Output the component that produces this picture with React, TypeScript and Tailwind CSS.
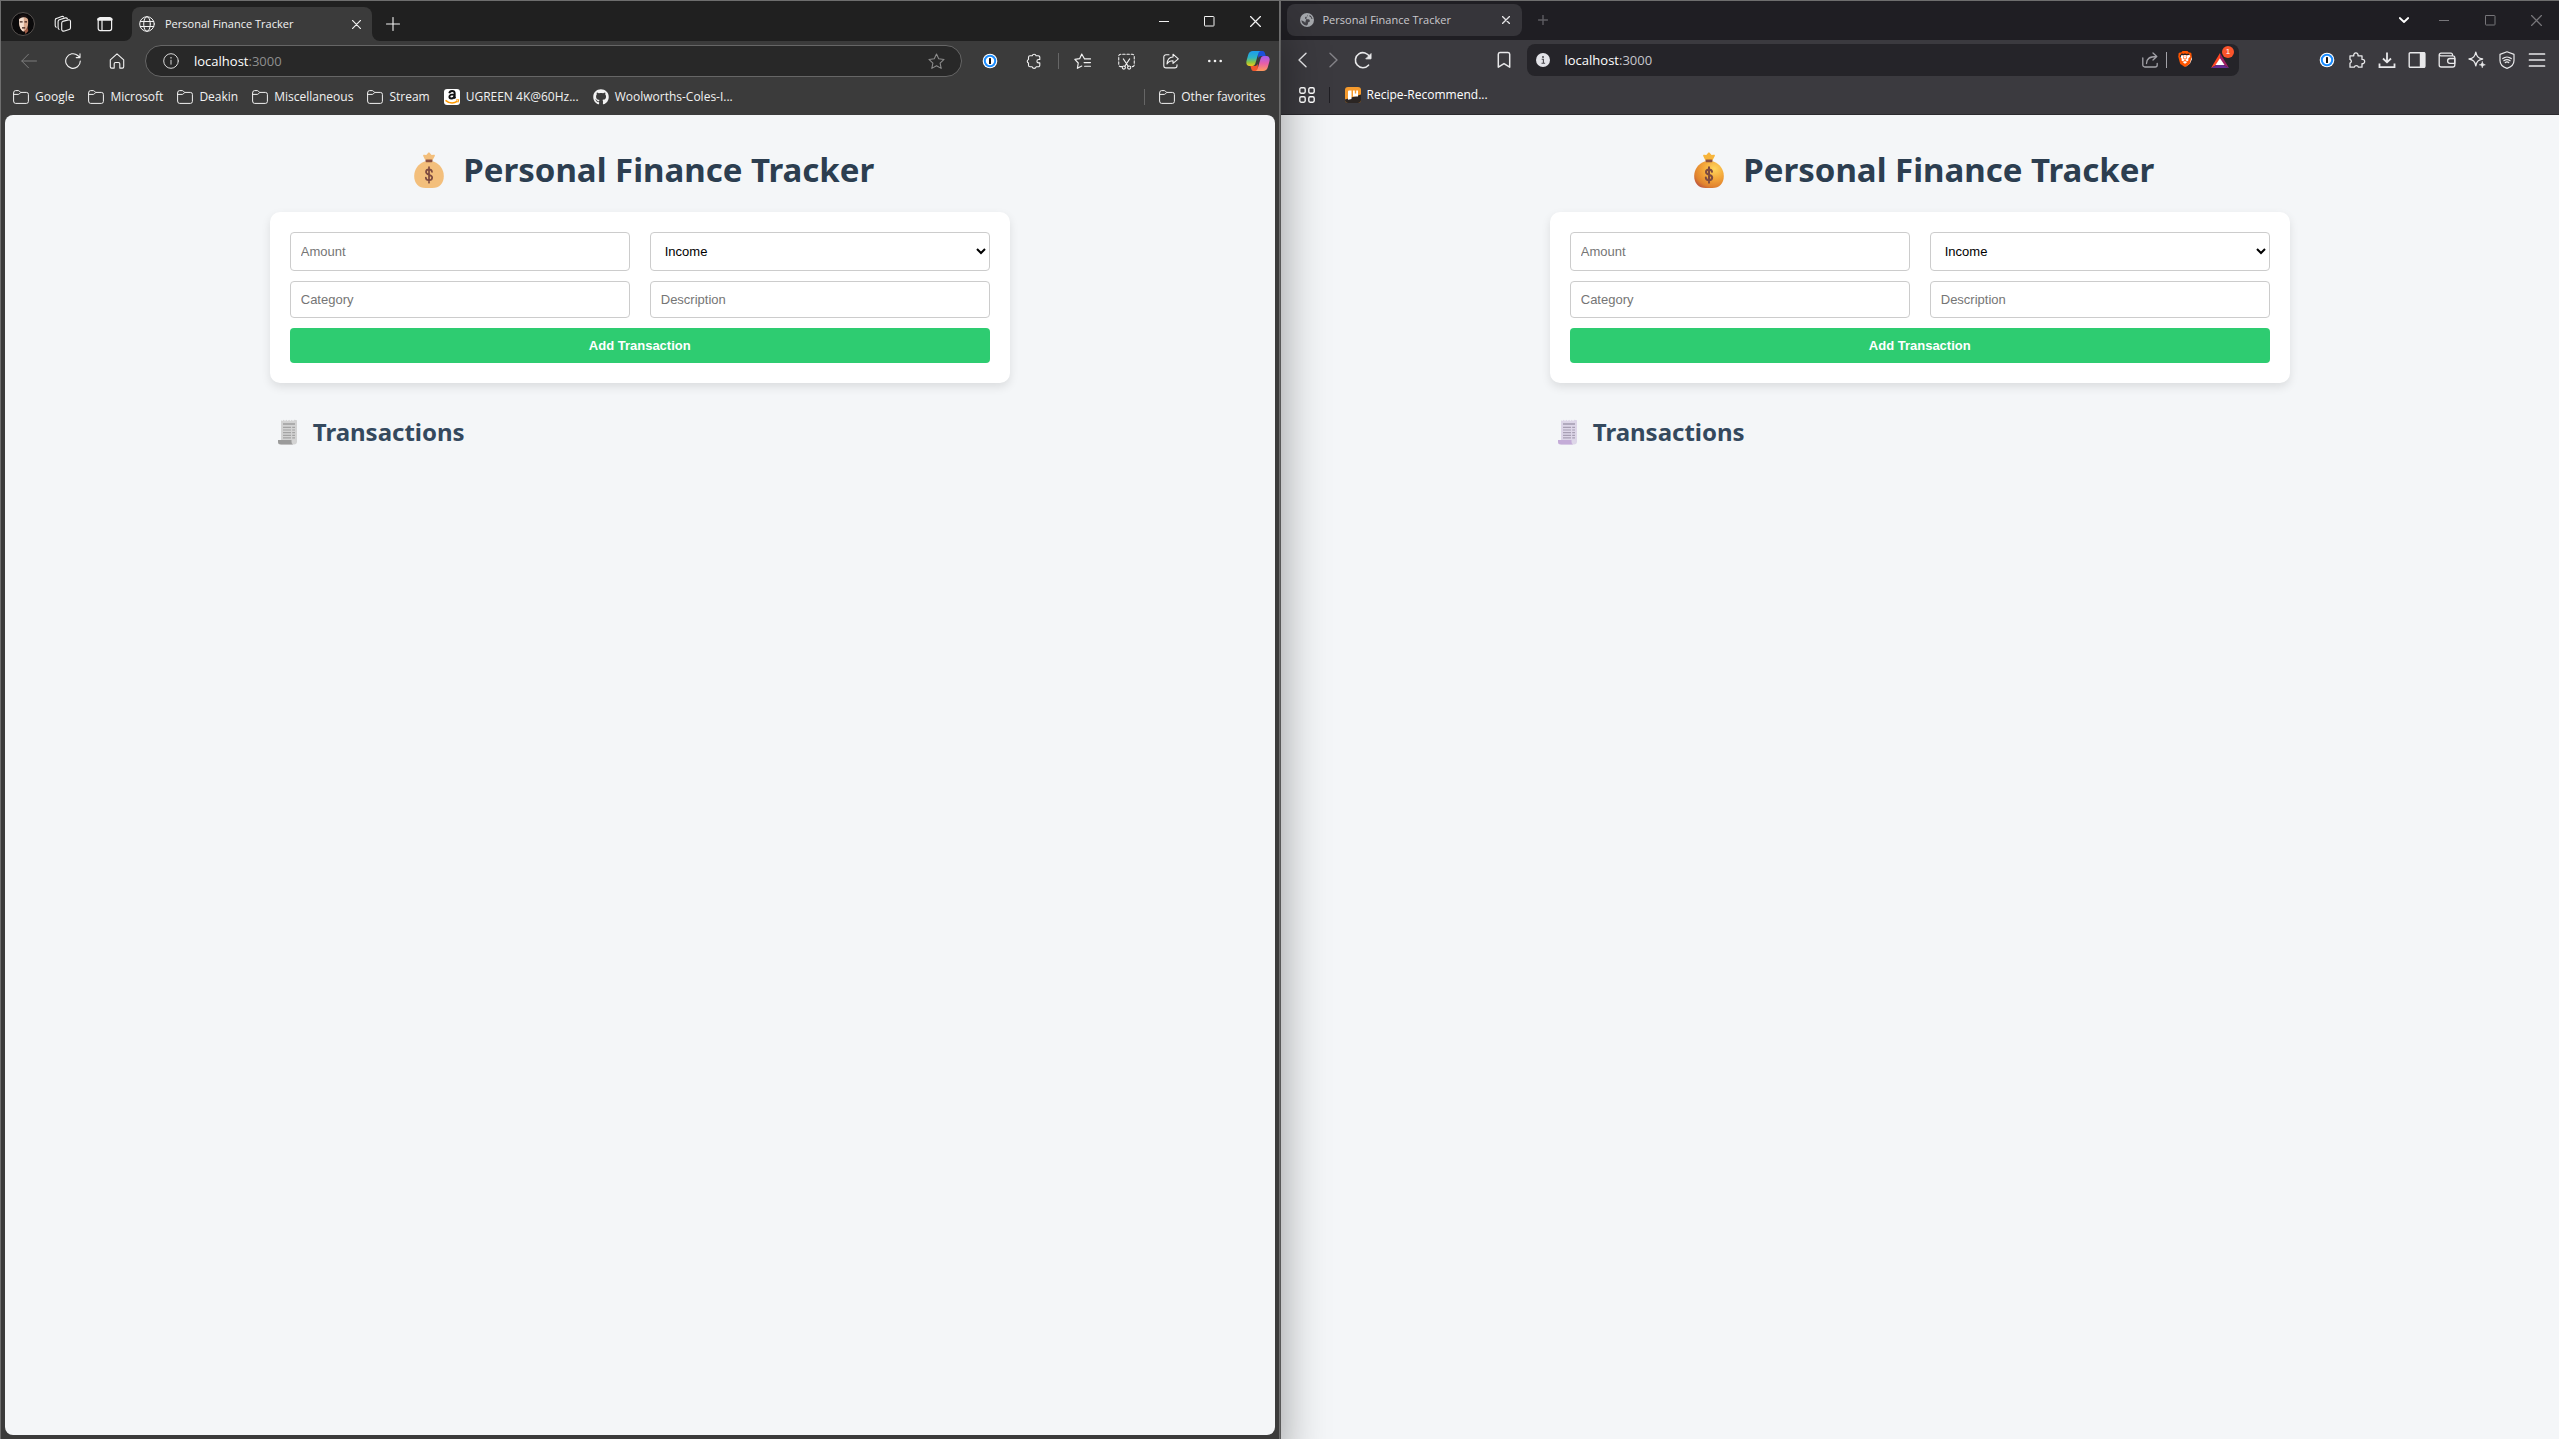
import type { ReactNode } from "react";
import { FaGithub } from "react-icons/fa";
import { SiBrave } from "react-icons/si";

type SvgProps = { size?: number; className?: string; sw?: number; children: ReactNode; box?: string };

function Svg({ size = 16, className = "", sw = 1, children, box = "0 0 16 16" }: SvgProps) {
  return (
    <svg
      width={size}
      height={size}
      viewBox={box}
      fill="none"
      stroke="currentColor"
      strokeWidth={sw}
      strokeLinecap="round"
      strokeLinejoin="round"
      className={`shrink-0 ${className}`}
      aria-hidden="true"
    >
      {children}
    </svg>
  );
}

function ToolButton({ label, className = "", children }: { label: string; className?: string; children: ReactNode }) {
  return (
    <button type="button" aria-label={label} className={`flex h-8 shrink-0 items-center justify-center ${className}`}>
      {children}
    </button>
  );
}

function Folder() {
  return (
    <Svg size={16}>
      <path d="M.6 3.6a2 2 0 0 1 2-2h2.6c.5 0 .9.2 1.200.5l1.300 1.300h5.700a2 2 0 0 1 2 2v7a2 2 0 0 1-2 2H2.600a2 2 0 0 1-2-2z" />
      <path d="M.8 5.400h4.400c.5 0 .9-.2 1.200-.5l1.200-1.300" />
    </Svg>
  );
}

function OnePassword() {
  return (
    <Svg size={16}>
      <circle cx="8" cy="8" r="7.300" fill="#fff" stroke="none" />
      <circle cx="8" cy="8" r="5.200" stroke="#1a8cff" strokeWidth="2" />
      <rect x="7" y="5" width="2" height="6" rx=".6" fill="#111" stroke="none" />
    </Svg>
  );
}

function Puzzle() {
  return (
    <Svg size={16} sw={1.1}>
      <path d="M4 2.800h2.200a2 2 0 0 1 3.900 0h2.200A1.500 1.500 0 0 1 13.800 4.300v2.200h-1.200a1.700 1.700 0 0 0 0 3.400h1.200v2.400a1.500 1.500 0 0 1-1.500 1.500H10.100a2 2 0 0 1-3.900 0H4a1.500 1.500 0 0 1-1.500-1.500v-2.200a2 2 0 0 1 0-3.700V4.300A1.500 1.500 0 0 1 4 2.800z" />
    </Svg>
  );
}

function BravePuzzle() {
  return (
    <Svg size={18} sw={1.3} box="0 0 18 18">
      <path d="M2 4.800h3.800a2.200 2.200 0 1 1 4.200 0h4v3.600a2.200 2.200 0 1 1 0 4.300v3.500h-3.600a2.100 2.100 0 0 0-4.100 0H2v-4a2 2 0 0 0 0-3.800z" />
    </Svg>
  );
}

function MinimizeIcon() {
  return <Svg size={10} box="0 0 10 10"><path d="M0 5.500h10" /></Svg>;
}
function MaximizeIcon() {
  return <Svg size={11} box="0 0 11 11"><rect x=".5" y=".5" width="9.500" height="9.500" rx=".6" /></Svg>;
}
function CloseIcon({ size = 11, sw = 1.1 }: { size?: number; sw?: number }) {
  return <Svg size={size} sw={sw} box="0 0 10 10"><path d="M.5.5l9 9M9.500.5l-9 9" /></Svg>;
}

function WindowControls({ className = "" }: { className?: string }) {
  return (
    <div className={`flex ${className}`}>
      <ToolButton label="Minimize" className="w-[46px]"><MinimizeIcon /></ToolButton>
      <ToolButton label="Maximize" className="w-[46px]"><MaximizeIcon /></ToolButton>
      <ToolButton label="Close window" className="w-[46px]"><CloseIcon /></ToolButton>
    </div>
  );
}

function MoneyBag({ glossy }: { glossy: boolean }) {
  const body = glossy ? "url(#bagBody)" : "#f3bf7c";
  return (
    <svg width="36" height="36" viewBox="0 0 36 36" className="shrink-0" aria-hidden="true">
      {glossy && (
        <defs>
          <radialGradient id="bagBody" cx=".68" cy=".28" r=".85">
            <stop offset="0" stopColor="#ffd65c" />
            <stop offset=".45" stopColor="#f3a63a" />
            <stop offset=".8" stopColor="#e0822f" />
            <stop offset="1" stopColor="#b9503f" />
          </radialGradient>
        </defs>
      )}
      <path
        fill={glossy ? "#f7b53c" : "#f3bf7c"}
        d="M14.300 8.200 12.200 4c-.4-.9.300-1.500 1.100-1.300l2 .4L17 .9c.5-.6 1.300-.6 1.800 0l1.800 2.200 2.100-.4c.9-.2 1.600.5 1.100 1.300l-2.200 4.200z"
      />
      <path fill={body} d="M13.500 9.500h9c6 2.300 10.300 7.800 10.300 14.500 0 7.500-4.300 12-11.500 12h-6.600C7.500 36 3.200 31.500 3.200 24c0-6.700 4.300-12.200 10.300-14.500z" />
      <rect x="14.500" y="7.400" width="7" height="2.800" rx="1" fill="#8a4f3f" />
      <path
        d="M21 19.800c-.2-1.600-1.500-2.400-3-2.400s-3 .9-3 2.500c0 3.500 6.200 2.200 6.200 5.700 0 1.700-1.500 2.700-3.200 2.700s-3.200-.9-3.200-2.700M18 15.200v15.500"
        fill="none"
        stroke="#7d4a40"
        strokeWidth={glossy ? 2 : 1.7}
        strokeLinecap="round"
      />
    </svg>
  );
}

function ReceiptGlyph({ tinted }: { tinted: boolean }) {
  const paper = tinted ? "#ddd6e8" : "#d3d3d3";
  const line = tinted ? "#a79fb3" : "#a3a3a3";
  return (
    <svg width="26" height="26" viewBox="0 0 26 26" className="shrink-0" aria-hidden="true">
      <path fill={paper} d="M6 1.200l1.300.8L8.700.8 10 2l1.400-1.200L12.700 2 14.100.8l1.300 1.200L16.700.8 18 2l1.400-1.200L22 1.200V22.500a3 3 0 0 1-3 3H6z" />
      <path fill={tinted ? "#c4acd8" : "#9b9b9b"} d="M3 21h13.500v1.500a3 3 0 0 0 1.500 3H5.500A2.500 2.500 0 0 1 3 23z" />
      <path stroke={line} strokeWidth="1.600" d="M8 5h12" />
      <path stroke={line} strokeWidth="1.200" d="M8 8.300h8M8 11h8M8 13.700h8M8 16.400h8M8 18.900h8M17.200 8.300h2.800M17.200 11h2.800M17.200 13.700h2.800M17.200 16.400h2.800M17.200 18.900h2.800" />
    </svg>
  );
}

function FinanceApp({ glossy }: { glossy: boolean }) {
  const field =
    "w-full rounded-[4px] border border-[#cccccc] bg-white p-[10px] text-[13px] leading-[15px] placeholder:text-[#757575]";
  return (
    <div className="mx-auto w-full max-w-[740px] pt-[31px] font-['Noto_Sans','Open_Sans',sans-serif]">
      <h1 className="flex items-center justify-center gap-4 pl-[6px] text-[33px] leading-[48px] font-bold text-[#2c3e50]">
        <MoneyBag glossy={glossy} />
        Personal Finance Tracker
      </h1>
      <form
        onSubmit={(e) => e.preventDefault()}
        className="mt-[18px] grid grid-cols-2 gap-x-5 gap-y-[10px] rounded-[10px] bg-white p-5 font-['Liberation_Sans',Arial,sans-serif] shadow-[0_4px_10px_rgba(0,0,0,0.1)]"
      >
        <input aria-label="Amount" type="number" placeholder="Amount" className={field} />
        <select aria-label="Type" defaultValue="income" className="h-[39px] w-full rounded-[4px] border border-[#cccccc] bg-white p-[10px] text-[13px] leading-[17px] text-black">
          <option value="income">Income</option>
          <option value="expense">Expense</option>
        </select>
        <input aria-label="Category" type="text" placeholder="Category" className={field} />
        <input aria-label="Description" type="text" placeholder="Description" className={field} />
        <button type="submit" className="col-span-2 rounded-[4px] bg-[#2ecc71] p-[10px] text-[13px] leading-[15px] font-bold text-white">
          Add Transaction
        </button>
      </form>
      <h2 className="mt-8 flex items-center gap-3 pl-[5px] text-[24px] leading-[34px] font-bold text-[#34495e]">
        <ReceiptGlyph tinted={glossy} />
        Transactions
      </h2>
    </div>
  );
}

function Avatar() {
  return (
    <svg width="24" height="24" viewBox="0 0 24 24" aria-hidden="true">
      <circle cx="12" cy="12" r="11.500" fill="#0b0a0b" stroke="#55504e" />
      <path d="M8.300 6c2-2.500 7-2.500 8.300.2.900 2 .7 7-.2 9.300-.8 2-2 4-3.600 4-1.500 0-3-2.100-3.800-4.100-.8-2.500-1.300-7.300-.7-9.400z" fill="#d9a98d" />
      <path d="M8.300 6c2-2.500 4.500-2 4.500.2.200 4 0 9-.2 13.300-1.400-.2-2.800-2.100-3.600-3.900-.8-2.500-1.300-7.500-.7-9.600z" fill="#f4dfcf" />
      <path d="M8.800 9.800h2.800M13.500 9.800h2.500M11 15.800h3.200" stroke="#3a1f18" strokeWidth="1.300" />
      <path d="M13.500 18.500c1.500-.6 2.300-2 2.800-3.500l1 4-2.800 3z" fill="#9c5a44" />
      <path d="M7.300 8c.3-4 3-5.500 5.200-5.500s4.500 1 4.600 4.500c-1.500-1.500-3-1.800-4.800-1.800S9 6 7.300 8z" fill="#1c1212" />
    </svg>
  );
}

function Copilot() {
  return (
    <svg width="24" height="22" viewBox="0 0 24 22" aria-hidden="true">
      <defs>
        <linearGradient id="cpA" x1="0" y1="0" x2="0" y2="1">
          <stop offset="0" stopColor="#1b9cf0" />
          <stop offset=".45" stopColor="#2fb5c4" />
          <stop offset=".75" stopColor="#8fc63d" />
          <stop offset="1" stopColor="#f2c81f" />
        </linearGradient>
        <linearGradient id="cpB" x1="0" y1="0" x2="0" y2="1">
          <stop offset="0" stopColor="#a45cf0" />
          <stop offset=".5" stopColor="#e85fa8" />
          <stop offset="1" stopColor="#ff9a5a" />
        </linearGradient>
      </defs>
      <path d="M12 1h4.500c1.500 0 2.200 1.200 2.700 3l.6 2H15c-1.500 0-2.300 1-2.700 2.500z" fill="#1c50d8" />
      <path d="M12 21H7.500c-1.500 0-2-1.200-2.500-3l-.6-2H9c1.500 0 2.300-1 2.700-2.500z" fill="#f2552c" />
      <path d="M7 1h7.500c-1.300.3-1.900 1.500-2.400 3.200L9.500 13c-.6 2-1.500 3-3.300 3H3.500C.8 16-.2 13.500.6 10.500l1.700-6C3 2.300 4.500 1 7 1z" fill="url(#cpA)" />
      <path d="M17 21H9.500c1.300-.3 1.900-1.500 2.400-3.200L14.500 9c.6-2 1.500-3 3.300-3h2.700c2.700 0 3.700 2.500 2.900 5.500l-1.700 6c-.7 2.200-2.200 3.500-4.700 3.500z" fill="url(#cpB)" />
    </svg>
  );
}

function AmazonIcon() {
  return (
    <svg width="16" height="16" viewBox="0 0 16 16" className="shrink-0" aria-hidden="true">
      <rect width="16" height="16" rx="3" fill="#fff" />
      <path d="M5.300 4.300C5.600 2.700 6.600 2 8.100 2c1.700 0 2.600.8 2.600 2.400v3c0 .9.200 1.400.7 2M10.500 5.400C7.300 5.400 5.400 6 5.400 7.800c0 1.100.8 1.700 1.800 1.700 1.600 0 3.300-1.100 3.300-3.500" fill="none" stroke="#111" strokeWidth="1.900" />
      <path d="M1.500 11.300c4 3.300 8.500 3.300 12 .8" fill="none" stroke="#ff9900" strokeWidth="1.500" />
      <path d="M12 11l2.800-.3-.8 2.800" fill="none" stroke="#ff9900" strokeWidth="1" />
    </svg>
  );
}

function Bookmark({ icon, label }: { icon: ReactNode; label: string }) {
  return (
    <a href="#" className="flex shrink-0 items-center gap-[6px] whitespace-nowrap">
      {icon}
      {label}
    </a>
  );
}

function EdgeWindow() {
  return (
    <section aria-label="Edge window" className="relative z-10 flex w-1/2 flex-col border-t border-r border-l border-[#6e6e6e] bg-[#3b3b3b] text-[#f2f2f2] shadow-[0_30px_44px_rgba(0,0,0,0.4)]">
      <header className="flex h-10 bg-[#202020]">
        <div className="flex items-center pt-[6px] pl-[2px]">
          <ToolButton label="Profile" className="w-10"><Avatar /></ToolButton>
          <ToolButton label="Workspaces" className="w-10">
            <Svg size={18} sw={1.1} box="0 0 18 18">
              <path d="M8.700 6.400 14.500 4.900q1.900-.4 2 1.500v6.400q0 1.300-1.300 1.700l-4.700 1.500Q8 16.600 7.700 14.600V8.200q0-1.400 1-1.800z" />
              <path d="M5 14.400q-.9-.6-.9-1.800V6.500q0-1.400 1.300-1.800l6-1.800q1.500-.3 2 .9" />
              <path d="M2.200 12.200q-1-.6-1-1.800V5.200q0-1.400 1.300-1.800L7.700 1.500q1.400-.4 2 .5" />
            </Svg>
          </ToolButton>
          <ToolButton label="Tab actions" className="w-11">
            <Svg size={16} sw={1.2}>
              <rect x="1.200" y="1.600" width="13.400" height="13" rx="2" />
              <path d="M1.500 3.400h12.800" strokeWidth="2.600" />
              <path d="M5 4.500v10" />
            </Svg>
          </ToolButton>
        </div>
        <div className="relative mt-[6px] ml-[5px] flex w-60 items-center gap-[10px] rounded-t-lg bg-[#3b3b3b] pr-2 pl-[7px]">
          <svg width="8" height="8" className="absolute bottom-0 -left-2" aria-hidden="true"><path d="M8 0v8H0a8 8 0 0 0 8-8z" fill="#3b3b3b" /></svg>
          <svg width="8" height="8" className="absolute -right-2 bottom-0" aria-hidden="true"><path d="M0 0v8h8a8 8 0 0 1-8-8z" fill="#3b3b3b" /></svg>
          <Svg size={16}>
            <circle cx="8" cy="8" r="7.300" />
            <ellipse cx="8" cy="8" rx="3.300" ry="7.300" />
            <path d="M1.400 5.500h13.200M1.400 10.500h13.200" />
          </Svg>
          <span className="grow text-[11px] whitespace-nowrap">Personal Finance Tracker</span>
          <ToolButton label="Close tab" className="w-4"><CloseIcon size={9} sw={1.3} /></ToolButton>
        </div>
        <ToolButton label="New tab" className="mt-[7px] w-[42px]">
          <Svg size={14} sw={1.1} box="0 0 14 14"><path d="M7 .5v13M.5 7h13" /></Svg>
        </ToolButton>
        <WindowControls className="ml-auto pt-1" />
      </header>

      <div className="flex h-10 items-center pl-[6px]">
        <ToolButton label="Back" className="w-11 text-[#7c7c7c]">
          <Svg size={16}><path d="M15.500 8H.8M7.500 1.200.8 8l6.700 6.800" /></Svg>
        </ToolButton>
        <ToolButton label="Refresh" className="w-11">
          <Svg size={16} sw={1.1}><path d="M15.300 8A7.300 7.300 0 1 1 12.800 2.500L14.800 4.400M15 .8v3.800h-3.800" /></Svg>
        </ToolButton>
        <ToolButton label="Home" className="w-11">
          <Svg size={16} sw={1.1}><path d="M1.300 6.800 8 .8l6.700 6v7a1.300 1.300 0 0 1-1.300 1.300h-2.600V10.800A1.300 1.300 0 0 0 9.500 9.500h-3a1.300 1.300 0 0 0-1.300 1.300v4.300H2.600a1.300 1.300 0 0 1-1.300-1.300z" /></Svg>
        </ToolButton>
        <div className="ml-[6px] flex h-8 min-w-0 grow items-center rounded-full border border-[#666666] bg-[#282828] pr-4 pl-[17px]">
          <Svg size={16} className="text-[#d8d8d8]">
            <circle cx="8" cy="8" r="7.300" />
            <path d="M8 7.200v4" />
            <path d="M8 4.600v.3" strokeWidth="1.400" />
          </Svg>
          <p className="ml-[15px] grow text-[13px] leading-5 text-white">
            localhost<span className="text-[#8f8f8f]">:3000</span>
          </p>
          <button type="button" aria-label="Favorite this page" className="text-[#8c8c8c]">
            <Svg size={17}><path d="M8 .9l2.100 4.600 5 .6-3.700 3.400 1 5L8 12l-4.400 2.500 1-5L.9 6.100l5-.6z" /></Svg>
          </button>
        </div>
        <ToolButton label="1Password" className="ml-[6px] w-11"><OnePassword /></ToolButton>
        <ToolButton label="Extensions" className="w-11"><Puzzle /></ToolButton>
        <span className="mx-[2px] h-4 w-px bg-[#666666]" />
        <ToolButton label="Favorites" className="w-11">
          <Svg size={17} sw={1.1}>
            <path d="M9.800 5.400 7.300 1 5.300 5.300.8 6l3.200 3.400-.8 5L7.300 12.300" />
            <path d="M10 5.500h5.500M9.500 9h6M10 12.500h5.500" />
          </Svg>
        </ToolButton>
        <ToolButton label="Screenshot" className="w-11">
          <Svg size={17}>
            <path d="M3.500 12.800h-1A1.800 1.800 0 0 1 .7 11V3A1.800 1.800 0 0 1 2.500 1.200h11A1.800 1.800 0 0 1 15.300 3v8a1.800 1.800 0 0 1-1.800 1.800h-1" strokeDasharray="2.300 1.700" />
            <path d="M5 5.500l4.600 7M11 5.500l-4.600 7" />
            <circle cx="5.500" cy="13.700" r="1.500" />
            <circle cx="10.500" cy="13.700" r="1.500" />
          </Svg>
        </ToolButton>
        <ToolButton label="Share" className="w-11">
          <Svg size={16} sw={1.1}>
            <path d="M6 1.700H3A2.200 2.200 0 0 0 .8 3.900v8.800A2.200 2.200 0 0 0 3 14.900h8.800a2.200 2.200 0 0 0 2.200-2.200v-1" />
            <path d="M10 1.200l5.300 4.600L10 10.400V7.800c-3 0-4.800 1-6 3.200.2-3.800 2.300-6.800 6-7z" />
          </Svg>
        </ToolButton>
        <ToolButton label="Settings and more" className="w-11">
          <Svg size={16}>
            <g fill="currentColor" stroke="none">
              <circle cx="2.300" cy="8" r="1.300" /><circle cx="8" cy="8" r="1.300" /><circle cx="13.700" cy="8" r="1.300" />
            </g>
          </Svg>
        </ToolButton>
        <ToolButton label="Copilot" className="w-[42px]"><Copilot /></ToolButton>
      </div>

      <nav aria-label="Favorites bar" className="flex h-[34px] items-center gap-[14px] pr-[13px] pb-[2px] pl-3 text-[12px]">
        <Bookmark icon={<Folder />} label="Google" />
        <Bookmark icon={<Folder />} label="Microsoft" />
        <Bookmark icon={<Folder />} label="Deakin" />
        <Bookmark icon={<Folder />} label="Miscellaneous" />
        <Bookmark icon={<Folder />} label="Stream" />
        <Bookmark icon={<AmazonIcon />} label="UGREEN 4K@60Hz..." />
        <Bookmark icon={<FaGithub size={16} />} label="Woolworths-Coles-I..." />
        <span className="ml-auto h-4 w-px bg-[#666666]" />
        <Bookmark icon={<Folder />} label="Other favorites" />
      </nav>

      <main className="mx-1 mb-1 grow rounded-lg bg-[#f4f6f8]">
        <FinanceApp glossy={false} />
      </main>
    </section>
  );
}

function BraveWindow() {
  return (
    <section aria-label="Brave window" className="flex w-1/2 flex-col border-t border-l border-[#6e6e6e] bg-[#3b3a3f] text-[#e8e8ea]">
      <header className="flex h-[39px] bg-[#1f1e23]">
        <div className="mt-[3px] ml-[6px] flex h-8 w-[235px] items-center gap-[9px] rounded-lg bg-[#36353a] pr-2 pl-[13px] text-[#c9c8cc]">
          <svg width="14" height="14" viewBox="0 0 14 14" className="shrink-0" aria-hidden="true">
            <circle cx="7" cy="7" r="7" fill="#a5a8ad" />
            <path d="M7.500 1.400C8.200 2.800 7.300 3.700 5.800 3.800c-.6 0-.7.8-.7 1.500 0 .8.800 1 1.700 1h1.700c1 0 1.300.8 1.300 1.600 0 1-.9 1-1.400 1.300-.4.300-.3 1.300-.6 2-.3.800-1 1.300-1.500 1.400C3.500 12.200 1.500 10 1.400 7.200L4 8.500c.8.400 1 1 1 1.700" fill="#45444a" />
            <path d="M9.700 2.100c-.5.8-.3 1.700.6 1.900.7.100 1 .8 1 1.400 0 .5.600.8 1.200.6C12 4.200 11 2.800 9.700 2.100z" fill="#45444a" />
          </svg>
          <span className="grow text-[11px] whitespace-nowrap">Personal Finance Tracker</span>
          <ToolButton label="Close tab" className="w-4 text-[#e4e4e6]"><CloseIcon size={8} sw={1.7} /></ToolButton>
        </div>
        <ToolButton label="New tab" className="mt-[3px] w-[42px] text-[#5d5c62]">
          <Svg size={10} sw={1.4} box="0 0 10 10"><path d="M5 .5v9M.5 5h9" /></Svg>
        </ToolButton>
        <ToolButton label="Search tabs" className="mt-[3px] ml-auto w-[34px] text-white">
          <Svg size={10} sw={1.8} box="0 0 10 10"><path d="M.8 3l4.200 4 4.200-4" /></Svg>
        </ToolButton>
        <WindowControls className="pt-[3px] text-[#77767a]" />
      </header>

      <div className="flex h-10 items-center px-[7px]">
        <ToolButton label="Back" className="w-[30px]">
          <Svg size={16} sw={1.4}><path d="M11 1.200 4 8l7 6.800" /></Svg>
        </ToolButton>
        <ToolButton label="Forward" className="w-[30px] text-[#848388]">
          <Svg size={16} sw={1.4}><path d="M5 1.200 12 8l-7 6.800" /></Svg>
        </ToolButton>
        <ToolButton label="Reload" className="w-[30px]">
          <Svg size={18} sw={1.6} box="0 0 18 18">
            <path d="M14.500 14.200A7.500 7.500 0 1 1 15.700 6" />
            <path d="M17 3v4.800h-4.800z" fill="currentColor" strokeWidth="1" />
          </Svg>
        </ToolButton>
        <ToolButton label="Bookmark this page" className="ml-[111px] w-[30px]">
          <Svg size={18} sw={1.5} box="0 0 18 18"><path d="M3.300 3.200A1.800 1.800 0 0 1 5 1.400h8a1.800 1.800 0 0 1 1.700 1.800v13L9 12.600l-5.700 3.600z" /></Svg>
        </ToolButton>
        <div className="mr-[73px] ml-2 flex h-8 min-w-0 grow items-center rounded-lg bg-[#252429] pr-[10px] pl-[9px]">
          <svg width="14" height="14" viewBox="0 0 14 14" className="shrink-0" aria-hidden="true">
            <circle cx="7" cy="7" r="7" fill="#e3e3e8" />
            <path d="M5.700 6.300h1.700v4M5.500 10.300h3.600" stroke="#48474c" strokeWidth="1.100" fill="none" />
            <circle cx="7" cy="3.900" r="1" fill="#48474c" />
          </svg>
          <p className="ml-[15px] grow text-[13px] leading-5 text-white">
            localhost<span className="text-[#c6c6cc]">:3000</span>
          </p>
          <button type="button" aria-label="Share" className="text-[#a3a2a8]">
            <Svg size={16} sw={1.3}>
              <path d="M.8 6v7a2 2 0 0 0 2 2h10.400a2 2 0 0 0 2-2v-1.500" />
              <path d="M4.500 11.500C4.500 7 7 4.500 14.500 4.500M11 1l3.800 3.500L11 8" />
            </Svg>
          </button>
          <span className="mx-2 h-4 w-px bg-[#a3a2a8]" />
          <button type="button" aria-label="Brave Shields" className="ml-[2px]">
            <svg width="18" height="20" viewBox="0 0 18 20" aria-hidden="true">
              <path d="M4.500 5h9l1.500 4-2 4.500L9 16.500 5 13.500 3 9z" fill="#fff" />
              <SiBrave x="0" y="1" width="18" height="18" color="#ff5500" />
            </svg>
          </button>
          <button type="button" aria-label="Brave Rewards" className="relative ml-4">
            <svg width="18" height="18" viewBox="0 0 18 18" aria-hidden="true">
              <path d="M9 2 0 17l9-5z" fill="#ff4724" />
              <path d="M9 2l9 15-9-5z" fill="#9e1f63" />
              <path d="M0 17h18l-9-5z" fill="#662d91" />
              <path d="M9 7.200 4.500 14h9z" fill="#fff" />
            </svg>
            <span className="absolute -top-[5px] left-[11px] flex h-3 w-3 items-center justify-center rounded-full bg-[#fb542b] font-['Liberation_Sans',sans-serif] text-[8px] leading-3 text-white">1</span>
          </button>
        </div>
        <ToolButton label="1Password" className="w-[30px]"><OnePassword /></ToolButton>
        <ToolButton label="Extensions" className="w-[30px]"><BravePuzzle /></ToolButton>
        <ToolButton label="Downloads" className="w-[30px]">
          <Svg size={18} sw={1.8} box="0 0 18 18"><path d="M9 1.500v9.500M5 7.500 9 11.300l4-3.800M1.500 12.500v3.700h15v-3.700" strokeLinecap="butt" strokeLinejoin="miter" /></Svg>
        </ToolButton>
        <ToolButton label="Sidebar" className="w-[30px]">
          <Svg size={18} sw={1.4} box="0 0 18 18">
            <rect x="1.200" y="1.700" width="15.600" height="14.600" rx="1" />
            <path d="M12.500 2h4v14h-4z" fill="currentColor" />
          </Svg>
        </ToolButton>
        <ToolButton label="Wallet" className="w-[30px]">
          <Svg size={18} sw={1.3} box="0 0 18 18">
            <path d="M14.500 4.800V3.700a1.500 1.500 0 0 0-1.500-1.500H3a1.800 1.800 0 0 0-1.800 1.800v10A2 2 0 0 0 3.200 16h11.600a2 2 0 0 0 2-2V6.800a2 2 0 0 0-2-2H3A1.600 1.600 0 0 1 1.300 3.600" />
            <path d="M16.800 7.500H12a2.400 2.400 0 0 0 0 4.800h4.800z" />
          </Svg>
        </ToolButton>
        <ToolButton label="Leo AI" className="w-[30px]">
          <Svg size={18} sw={1.3} box="0 0 18 18">
            <path d="M7.800 1.200c.9 4.300 2.300 5.900 6.800 6.800-4.500.9-5.900 2.500-6.800 6.800C6.900 10.500 5.500 8.900 1 8c4.500-.9 5.900-2.500 6.800-6.800z" />
            <path d="M14.300 10.800c.4 2 1 2.600 3 3-2 .4-2.600 1-3 3-.4-2-1-2.600-3-3 2-.4 2.600-1 3-3z" fill="currentColor" strokeWidth=".6" />
          </Svg>
        </ToolButton>
        <ToolButton label="VPN" className="w-[30px]">
          <Svg size={18} sw={1.2} box="0 0 18 18">
            <path d="M9 .8l7 2.600v6c0 3.800-2.700 6.500-7 8-4.300-1.500-7-4.200-7-8v-6z" />
            <path d="M4.800 7.600c2.400-2 6-2 8.400 0M5.900 9.700c1.900-1.400 4.300-1.400 6.200 0M7.300 11.600c1-.8 2.400-.8 3.400 0" strokeWidth="1.300" />
          </Svg>
        </ToolButton>
        <ToolButton label="Menu" className="w-[30px]">
          <Svg size={18} sw={1.7} box="0 0 18 18"><path d="M1.500 3h15M1.500 9h15M1.500 15h15" /></Svg>
        </ToolButton>
      </div>

      <nav aria-label="Bookmarks bar" className="flex h-[35px] items-center border-b border-[#2b2a2e] pb-[5px] pl-[18px] text-[12px] text-white">
        <button type="button" aria-label="All apps">
          <Svg size={16} sw={1.4}>
            <rect x=".8" y=".8" width="5.400" height="5.400" rx="1.400" /><rect x="9.800" y=".8" width="5.400" height="5.400" rx="1.400" />
            <rect x=".8" y="9.800" width="5.400" height="5.400" rx="1.400" /><rect x="9.800" y="9.800" width="5.400" height="5.400" rx="1.400" />
          </Svg>
        </button>
        <span className="mr-[15px] ml-[14px] h-4 w-px bg-[#1f1e23]" />
        <Bookmark
          icon={
            <svg width="16" height="16" viewBox="0 0 16 16" className="shrink-0" aria-hidden="true">
              <rect width="16" height="16" rx="3" fill="#f59a2d" />
              <path d="M0 12.500 16 7.500V13a3 3 0 0 1-3 3H3a3 3 0 0 1-3-3z" fill="#2b2523" />
              <path d="M3 4.500a1 1 0 0 1 1-1h2.500V12L3 12.800zM8 3.500h1.800v3h1.400v-3H13v6H8z" fill="#fff" />
            </svg>
          }
          label="Recipe-Recommend..."
        />
      </nav>

      <main className="grow bg-[#f4f6f8]">
        <FinanceApp glossy />
      </main>
    </section>
  );
}

export default function App() {
  return (
    <div className="flex min-h-screen w-full overflow-hidden font-['Open_Sans','Noto_Sans',sans-serif]">
      <EdgeWindow />
      <BraveWindow />
    </div>
  );
}
